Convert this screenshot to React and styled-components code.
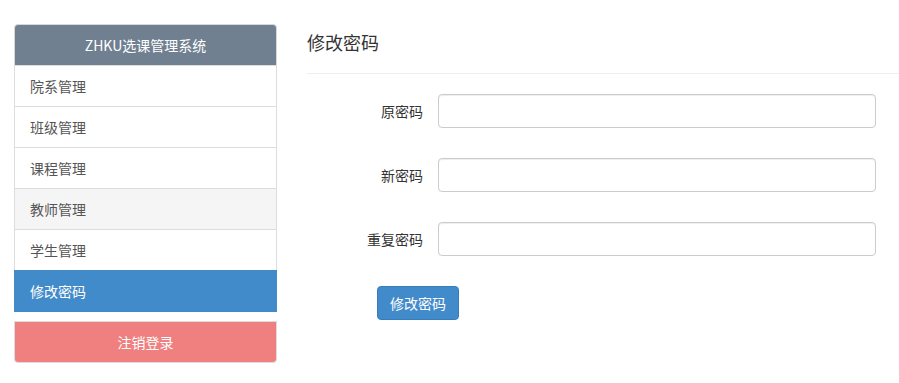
import React from "react";
import styled, { createGlobalStyle } from "styled-components";

const Global = createGlobalStyle`
  html, body { margin: 0; padding: 0; background: #fff; }
  body {
    font-family: "Noto Sans CJK SC", "Noto Sans", sans-serif;
    font-size: 14px;
    line-height: 1.42857;
    color: #333;
  }
  * { box-sizing: border-box; }
`;

const Page = styled.div`
  display: flex;
  align-items: flex-start;
  gap: 30px;
  padding: 24px 0 0 14px;
`;

const Sidebar = styled.nav`
  width: 263px;
  flex: none;
  display: flex;
  flex-direction: column;
`;

const Header = styled.div`
  height: 42px;
  line-height: 40px;
  border: 1px solid #d8d8d8;
  border-radius: 4px 4px 0 0;
  background: #708090;
  color: #fff;
  text-align: center;
  font-size: 14px;
`;

const Item = styled.a`
  display: block;
  position: relative;
  height: 42px;
  line-height: 40px;
  margin-top: -1px;
  padding: 0 15px;
  border: 1px solid ${(p) => (p.$active ? "#428bca" : "#ddd")};
  background: ${(p) => (p.$active ? "#428bca" : p.$hover ? "#f5f5f5" : "#fff")};
  color: ${(p) => (p.$active ? "#fff" : "#555")};
  font-size: 14px;
  text-decoration: none;
  z-index: ${(p) => (p.$active ? 2 : 1)};
`;

const Logout = styled.a`
  display: block;
  margin-top: 9px;
  height: 42px;
  line-height: 40px;
  border: 1px solid #ddd;
  border-radius: 0 0 4px 4px;
  background: #f08080;
  color: #fff;
  text-align: center;
  font-size: 14px;
  text-decoration: none;
`;

const Main = styled.main`
  flex: 1;
  min-width: 0;
`;

const Title = styled.h4`
  margin: 8px 0 0;
  padding-bottom: 21px;
  border-bottom: 1px solid #eee;
  font-size: 18px;
  font-weight: 400;
  line-height: 20px;
  color: #333;
`;

const Form = styled.form`
  display: flex;
  flex-direction: column;
  gap: 30px;
  padding-top: 20px;
`;

const Row = styled.div`
  display: flex;
  align-items: center;
  gap: 15px;
`;

const Label = styled.label`
  width: 116px;
  text-align: right;
  font-size: 14px;
  color: #333;
`;

const Input = styled.input`
  width: 438px;
  height: 34px;
  padding: 6px 12px;
  border: 1px solid #ccc;
  border-radius: 4px;
  box-shadow: inset 0 1px 1px rgba(0, 0, 0, 0.075);
  font-size: 14px;
  font-family: inherit;
  outline: none;
`;

const Button = styled.button`
  align-self: flex-start;
  margin-left: 70px;
  height: 34px;
  padding: 0 12px;
  border: 1px solid #357ebd;
  border-radius: 4px;
  background: #428bca;
  color: #fff;
  font-size: 14px;
  font-family: inherit;
  line-height: 32px;
  cursor: pointer;
`;

const items = [
  { label: "院系管理" },
  { label: "班级管理" },
  { label: "课程管理" },
  { label: "教师管理", hover: true },
  { label: "学生管理" },
  { label: "修改密码", active: true },
];

const fields = ["原密码", "新密码", "重复密码"];

export default function App() {
  return (
    <>
      <Global />
      <Page>
        <Sidebar>
          <Header>ZHKU选课管理系统</Header>
          {items.map((it) => (
            <Item key={it.label} href="#" $active={it.active} $hover={it.hover}>
              {it.label}
            </Item>
          ))}
          <Logout href="#">注销登录</Logout>
        </Sidebar>
        <Main>
          <Title>修改密码</Title>
          <Form onSubmit={(e) => e.preventDefault()}>
            {fields.map((f) => (
              <Row key={f}>
                <Label>{f}</Label>
                <Input type="password" />
              </Row>
            ))}
            <Button type="submit">修改密码</Button>
          </Form>
        </Main>
      </Page>
    </>
  );
}
